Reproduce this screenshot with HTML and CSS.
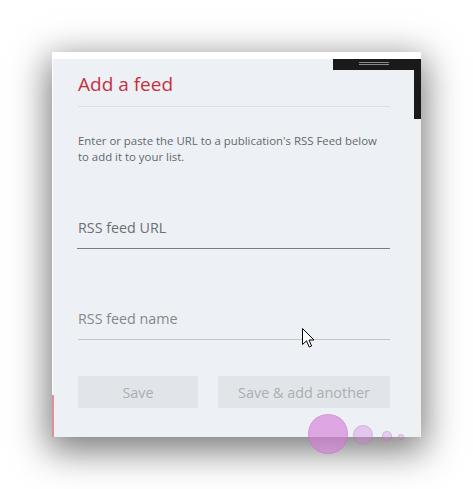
FILE: index.html
```html
<!DOCTYPE html>
<html lang="en">
<head>
<meta charset="utf-8">
<title>Add a feed</title>
<link rel="stylesheet" href="styles.css">
</head>
<body>
<div class="window">
  <div class="panel">
    <h1 class="title">Add a feed</h1>
    <div class="divider"></div>
    <p class="desc">Enter or paste the URL to a publication's RSS Feed below to add it to your list.</p>
    <div class="field field-url"><span class="placeholder">RSS feed URL</span></div>
    <div class="field field-name"><span class="placeholder">RSS feed name</span></div>
    <div class="buttons">
      <button class="btn btn-save">Save</button>
      <button class="btn btn-another">Save &amp; add another</button>
    </div>
  </div>
  <div class="scrollbar"><div class="thumb"></div></div>
  <div class="titlebar"><span class="grip"></span></div>
  <div class="accent"></div>
  <div class="dots">
    <span class="dot dot1"></span>
    <span class="dot dot2"></span>
    <span class="dot dot3"></span>
    <span class="dot dot4"></span>
  </div>
  <svg class="cursor" width="13" height="20" viewBox="0 0 13 20">
    <path d="M0.5 0.5 L0.5 16.5 L4.5 12.8 L7.2 19 L9.6 18 L7 12 L12 12 Z" fill="#fff" stroke="#000" stroke-width="1" stroke-linejoin="miter"/>
  </svg>
</div>
</body>
</html>
```

FILE: styles.css
```css
html, body {
  margin: 0;
  padding: 0;
  background: #ffffff;
}
body {
  width: 473px;
  height: 489px;
  overflow: hidden;
  font-family: "Open Sans", "Noto Sans", sans-serif;
}
.window {
  position: relative;
  margin: 52px 0 0 52px;
  width: 369px;
  height: 385px;
  box-sizing: border-box;
  padding: 7px 0 0 1px;
  background: #ffffff;
  display: flex;
  box-shadow: 0 10px 34px 4px rgba(0, 0, 0, 0.52);
}
.panel {
  flex: 1;
  background: #edf1f5;
  padding: 0 24px 0 25px;
  display: flex;
  flex-direction: column;
}
.title {
  margin: 12px 0 0 0;
  font-size: 19px;
  font-weight: 400;
  line-height: 26px;
  color: #c6303f;
}
.divider {
  margin-top: 9px;
  height: 1px;
  background: #e1dde3;
}
.desc {
  margin: 26px 0 0 0;
  max-width: 310px;
  font-size: 11.4px;
  line-height: 15.6px;
  color: #64686c;
}
.field {
  display: flex;
  align-items: flex-end;
  height: 30px;
  padding-bottom: 11px;
  box-sizing: border-box;
}
.field-url {
  margin-top: 55px;
  margin-left: -1px;
  border-bottom: 1px solid #7c7c7c;
}
.field-url .placeholder { margin-left: 1px; }
.field-name {
  margin-top: 61px;
  border-bottom: 1px solid #c4c6c9;
}
.placeholder {
  font-size: 14.3px;
  line-height: 18px;
  color: #6c6f73;
}
.field-name .placeholder { color: #85888c; }
.buttons {
  margin-top: 36px;
  display: flex;
  gap: 20px;
}
.btn {
  height: 32px;
  border: 0;
  padding: 0;
  background: #e1e5ea;
  color: #acaeb1;
  font-family: "Open Sans", "Noto Sans", sans-serif;
  font-size: 14.4px;
}
.btn-save { width: 120px; }
.btn-another { width: 172px; }
.scrollbar {
  width: 7px;
  background: #f0f0f0;
}
.thumb {
  height: 60px;
  background: #1a1a1a;
}
.titlebar {
  position: absolute;
  top: 7px;
  right: 0;
  width: 88px;
  height: 11px;
  background: #1a1a1a;
}
.grip {
  position: absolute;
  left: 26px;
  top: 3px;
  width: 30px;
  height: 1px;
  border-top: 1px solid #8a8a8a;
  border-bottom: 1px solid #8a8a8a;
}
.accent {
  position: absolute;
  left: 0;
  top: 343px;
  width: 2px;
  height: 42px;
  background: #df8f98;
}
.dots {
  position: absolute;
  left: 256px;
  top: 362px;
  width: 100px;
  height: 40px;
}
.dot {
  position: absolute;
  border-radius: 50%;
  background: rgba(212, 125, 218, 0.64);
  box-shadow: inset 0 0 0 1px rgba(170, 90, 175, 0.2);
}
.dot1 { left: 0; top: 0; width: 40px; height: 40px; }
.dot2 { left: 45px; top: 11px; width: 20px; height: 20px; background: rgba(212, 125, 218, 0.36); }
.dot3 { left: 74px; top: 17px; width: 10px; height: 10px; background: rgba(212, 125, 218, 0.32); }
.dot4 { left: 90px; top: 20px; width: 6px; height: 6px; background: rgba(212, 125, 218, 0.28); }
.cursor {
  position: absolute;
  left: 250px;
  top: 276px;
}
```
